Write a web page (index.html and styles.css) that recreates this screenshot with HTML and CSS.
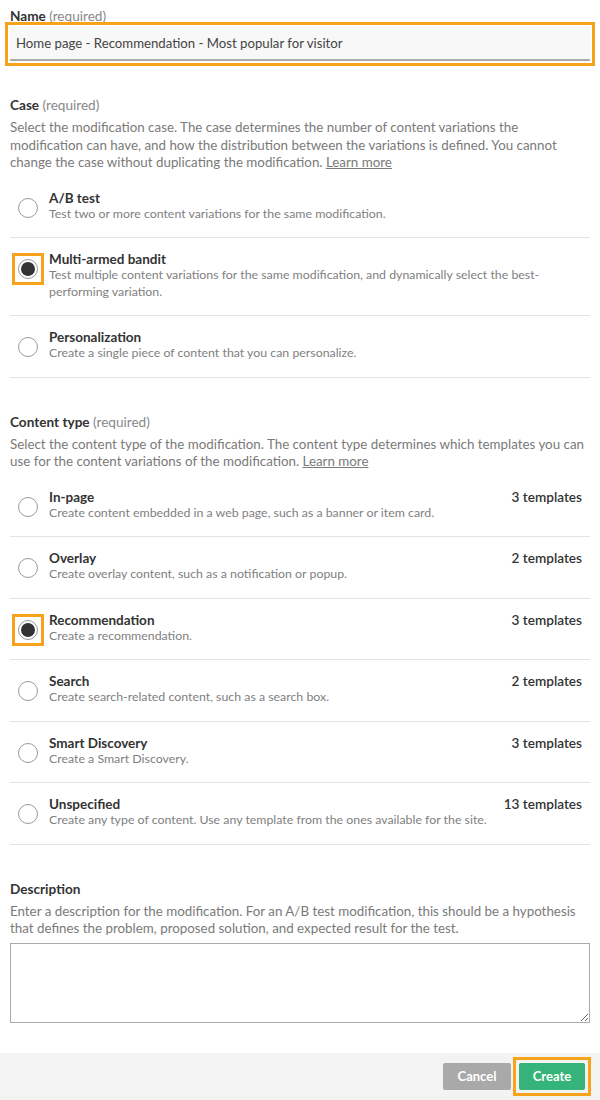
FILE: index.html
```html
<!DOCTYPE html>
<html lang="en">
<head>
<meta charset="utf-8">
<title>Create modification</title>
<link rel="stylesheet" href="styles.css">
</head>
<body>
<div class="form">
  <div class="field field-name">
    <div class="label">Name <span class="req">(required)</span></div>
    <div class="hl-input">
      <div class="input">Home page - Recommendation - Most popular for visitor</div>
    </div>
  </div>

  <div class="field">
    <div class="label">Case <span class="req">(required)</span></div>
    <p class="help">Select the modification case. The case determines the number of content variations the modification can have, and how the distribution between the variations is defined. You cannot change the case without duplicating the modification. <span class="link">Learn more</span></p>
    <div class="options">
      <div class="option">
        <span class="radio-wrap"><span class="radio"></span></span>
        <div class="opt-text">
          <div class="opt-title">A/B test</div>
          <div class="opt-desc">Test two or more content variations for the same modification.</div>
        </div>
      </div>
      <div class="option">
        <span class="radio-wrap hl"><span class="radio checked"></span></span>
        <div class="opt-text">
          <div class="opt-title">Multi-armed bandit</div>
          <div class="opt-desc">Test multiple content variations for the same modification, and dynamically select the best-performing variation.</div>
        </div>
      </div>
      <div class="option">
        <span class="radio-wrap"><span class="radio"></span></span>
        <div class="opt-text">
          <div class="opt-title">Personalization</div>
          <div class="opt-desc">Create a single piece of content that you can personalize.</div>
        </div>
      </div>
    </div>
  </div>

  <div class="field">
    <div class="label">Content type <span class="req">(required)</span></div>
    <p class="help">Select the content type of the modification. The content type determines which templates you can use for the content variations of the modification. <span class="link">Learn more</span></p>
    <div class="options">
      <div class="option">
        <span class="radio-wrap"><span class="radio"></span></span>
        <div class="opt-text">
          <div class="opt-title">In-page</div>
          <div class="opt-desc">Create content embedded in a web page, such as a banner or item card.</div>
        </div>
        <div class="count">3 templates</div>
      </div>
      <div class="option">
        <span class="radio-wrap"><span class="radio"></span></span>
        <div class="opt-text">
          <div class="opt-title">Overlay</div>
          <div class="opt-desc">Create overlay content, such as a notification or popup.</div>
        </div>
        <div class="count">2 templates</div>
      </div>
      <div class="option">
        <span class="radio-wrap hl"><span class="radio checked"></span></span>
        <div class="opt-text">
          <div class="opt-title">Recommendation</div>
          <div class="opt-desc">Create a recommendation.</div>
        </div>
        <div class="count">3 templates</div>
      </div>
      <div class="option">
        <span class="radio-wrap"><span class="radio"></span></span>
        <div class="opt-text">
          <div class="opt-title">Search</div>
          <div class="opt-desc">Create search-related content, such as a search box.</div>
        </div>
        <div class="count">2 templates</div>
      </div>
      <div class="option">
        <span class="radio-wrap"><span class="radio"></span></span>
        <div class="opt-text">
          <div class="opt-title">Smart Discovery</div>
          <div class="opt-desc">Create a Smart Discovery.</div>
        </div>
        <div class="count">3 templates</div>
      </div>
      <div class="option">
        <span class="radio-wrap"><span class="radio"></span></span>
        <div class="opt-text">
          <div class="opt-title">Unspecified</div>
          <div class="opt-desc">Create any type of content. Use any template from the ones available for the site.</div>
        </div>
        <div class="count">13 templates</div>
      </div>
    </div>
  </div>

  <div class="field">
    <div class="label">Description</div>
    <p class="help">Enter a description for the modification. For an A/B test modification, this should be a hypothesis that defines the problem, proposed solution, and expected result for the test.</p>
    <textarea class="textarea"></textarea>
  </div>
</div>
<div class="footer">
  <button class="btn btn-cancel">Cancel</button>
  <span class="hl-btn"><button class="btn btn-create">Create</button></span>
</div>
</body>
</html>
```

FILE: styles.css
```css
* { box-sizing: border-box; }
html, body { margin: 0; padding: 0; background: #fff; }
body {
  font-family: Lato, "Noto Sans", sans-serif;
  color: #333;
}
.form { padding: 7px 10px 0 10px; }
.field { margin-top: 35px; }
.field-name { margin-top: 0; }
.label {
  font-size: 13.6px;
  line-height: 18px;
  font-weight: 700;
  color: #333;
}
.req { font-weight: 400; color: #888; }
.hl-input {
  margin-top: 2px;
  outline: 3px solid #f7a21b;
  outline-offset: 2px;
}
.input {
  height: 34px;
  background: #f8f8f8;
  border-bottom: 2px solid #aaa;
  font-size: 13.2px;
  line-height: 32px;
  padding-left: 6px;
  color: #444;
}
.help {
  margin: 5px 0 5px 0;
  font-size: 13.35px;
  line-height: 17.5px;
  color: #7a7a7a;
}
.link { color: #7a7a7a; text-decoration: underline; }
.options { display: flex; flex-direction: column; }
.option {
  display: flex;
  align-items: flex-start;
  padding: 13px 8px 15px 8px;
  border-bottom: 1px solid #e4e4e4;
}
.radio-wrap {
  flex: none;
  display: block;
  width: 20px;
  height: 20px;
  margin-top: 8px;
}
.radio {
  display: block;
  width: 20px;
  height: 20px;
  border-radius: 50%;
  border: 1px solid #9a9a9a;
  background: #fff;
  position: relative;
}
.radio.checked::after {
  content: "";
  position: absolute;
  left: 2px; top: 2px;
  width: 14px; height: 14px;
  border-radius: 50%;
  background: #333;
}
.hl { outline: 3px solid #f7a21b; outline-offset: 3px; }
.opt-text { flex: 1; margin-left: 11px; }
.opt-title {
  font-size: 13.5px;
  line-height: 16px;
  font-weight: 700;
  color: #333;
}
.opt-desc {
  font-size: 12.35px;
  line-height: 16.5px;
  color: #808080;
}
.count {
  flex: none;
  font-size: 13.6px;
  line-height: 16px;
  color: #333;
  font-weight: 600;
}
.textarea {
  display: block;
  width: 100%;
  height: 80px;
  margin-top: 5px;
  border: 1px solid #aaa;
  border-radius: 0;
  resize: vertical;
  font-family: inherit;
}
.footer {
  margin-top: 30px;
  background: #f3f3f3;
  padding: 10px 15px 10px 15px;
  display: flex;
  justify-content: flex-end;
  gap: 8px;
}
.hl-btn { display: block; outline: 3px solid #f7a21b; outline-offset: 3px; height: 27px; }
.btn {
  display: block;
  height: 27px;
  border: none;
  border-radius: 2px;
  color: #fff;
  font-family: inherit;
  font-size: 13px;
  font-weight: 700;
  padding: 0;
}
.btn-cancel { background: #a9a9a9; width: 68px; }
.btn-create { background: #35b479; width: 66px; }
```
